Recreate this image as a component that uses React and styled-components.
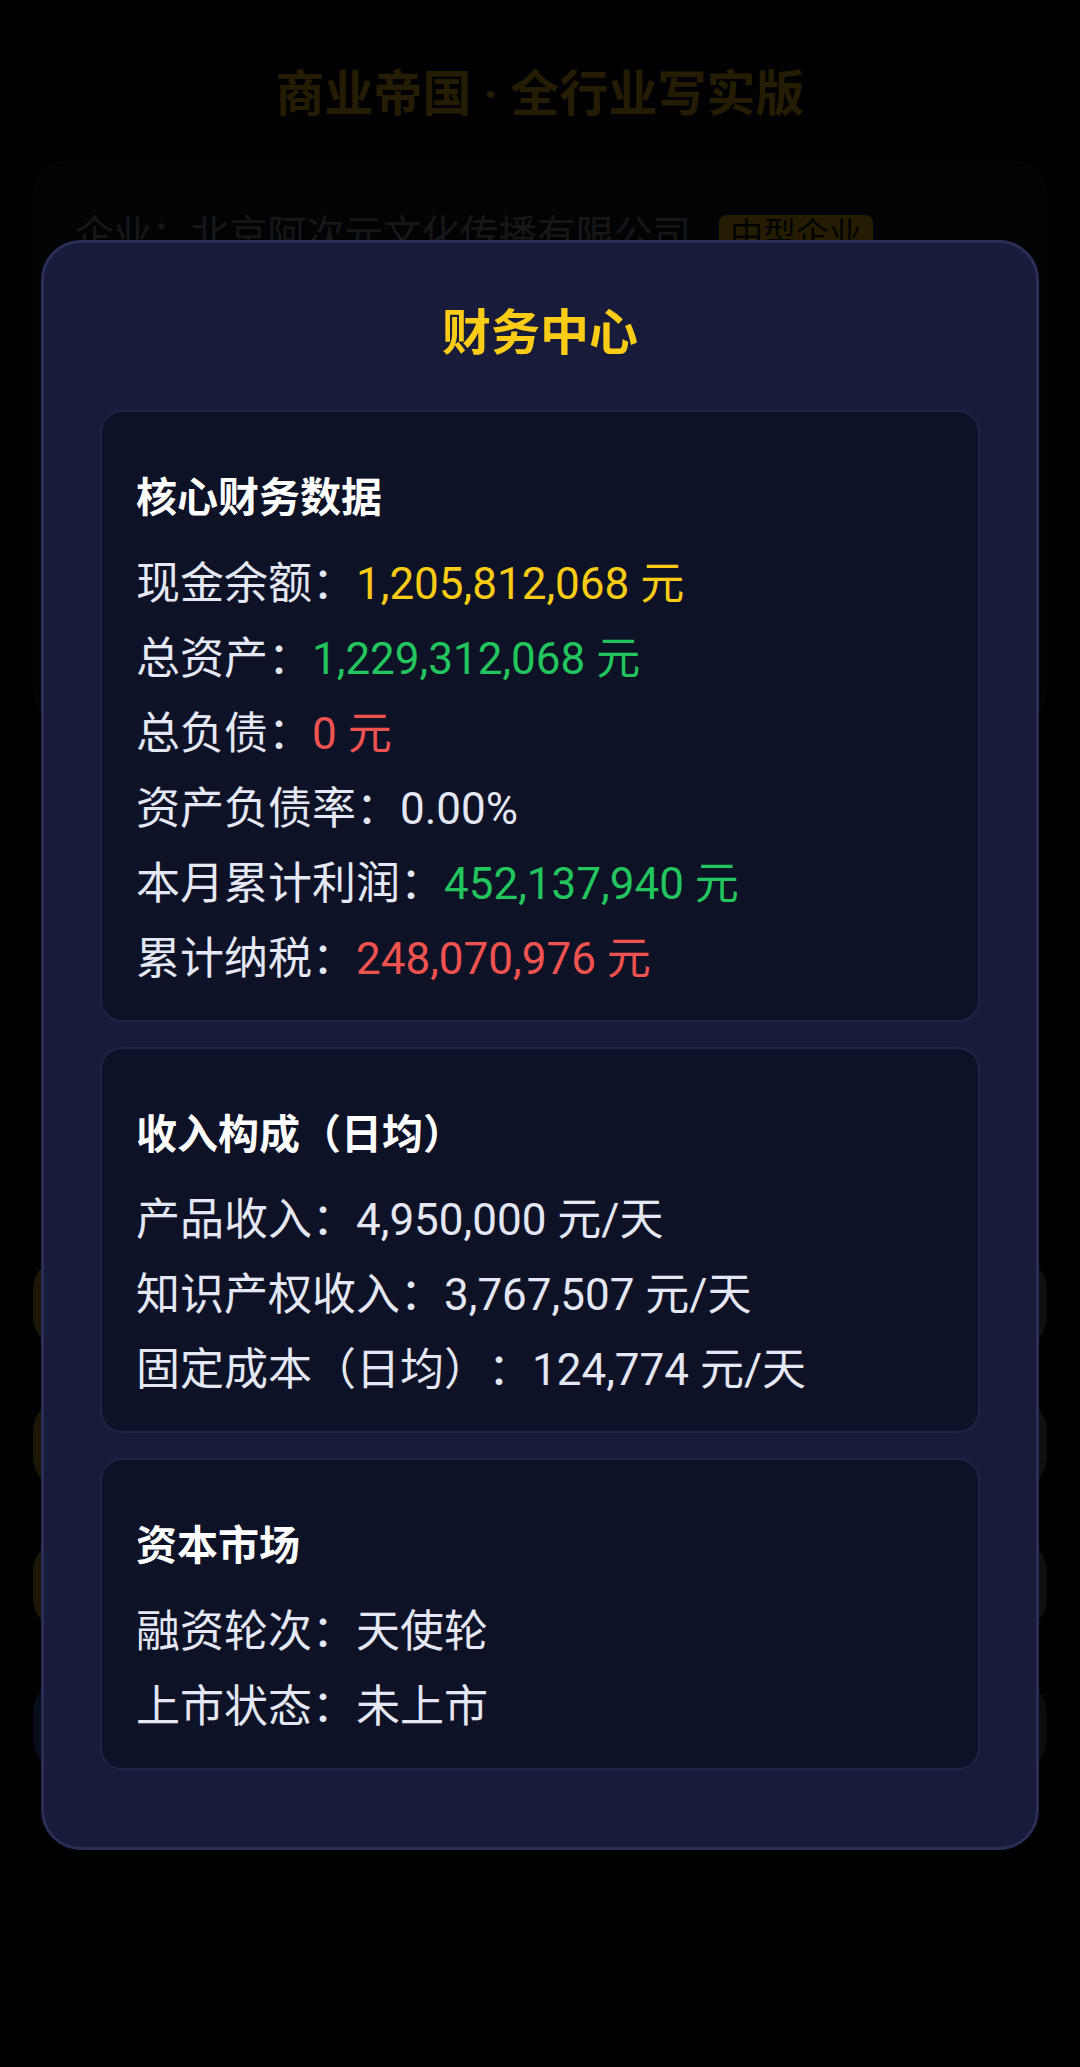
import React from "react"
import styled, { createGlobalStyle } from "styled-components"

const GlobalStyle = createGlobalStyle`
  html, body {
    margin: 0;
    padding: 0;
    background: #0a0d18;
  }
  body {
    font-family: Roboto, "Noto Sans CJK SC", "Noto Sans", sans-serif;
    color: #e4e7f4;
    text-spacing-trim: space-all;
  }
  * { box-sizing: border-box; }
`

// page that sits under the dialog
const Page = styled.div`
  min-height: 2067px;
  padding: 59px 33px 60px;
  background: #0a0d18;
`

const AppTitle = styled.h1`
  margin: 0 0 30px;
  text-align: center;
  font-size: 49px;
  line-height: 72px;
  font-weight: 700;
  color: #facc15;
`

const CompanyCard = styled.section`
  height: 560px;
  padding: 44px 40px;
  background: #111827;
  border: 2px solid #1f2937;
  border-radius: 33px;
  display: flex;
  align-items: flex-start;
  gap: 28px;
`

const CompanyName = styled.span`
  font-size: 38.5px;
  line-height: 56px;
  color: #9ca3af;
`

const Badge = styled.span`
  margin-top: 8px;
  padding: 0 11px;
  height: 40px;
  line-height: 40px;
  font-size: 33px;
  border-radius: 8px;
  background: #facc15;
  color: #1f1a05;
`

const ActionList = styled.div`
  margin-top: 536px;
  display: flex;
  flex-direction: column;
  gap: 49px;
`

const ActionButton = styled.div`
  height: 92px;
  border-radius: 33px;
  background: ${p => (p.$blue ? "linear-gradient(90deg, #3b5fc0, #4b5563)" : "linear-gradient(90deg, #c9a227, #6b7280)")};
`

// dialog
const Overlay = styled.div`
  position: fixed;
  inset: 0;
  background: rgba(0, 0, 0, 0.86);
  display: flex;
  justify-content: center;
  align-items: flex-start;
  padding-top: 240px;
`

const Modal = styled.div`
  width: 998px;
  padding: 55px 56px 52px;
  background: #181b3a;
  border: 3px solid #2a2e56;
  border-radius: 40px;
`

const ModalTitle = styled.h2`
  margin: 0 0 40px;
  text-align: center;
  font-size: 49px;
  line-height: 72px;
  font-weight: 700;
  color: #facc15;
`

const Card = styled.div`
  margin-bottom: 25px;
  padding: 56px 34px 23px;
  background: #0d1226;
  border: 2px solid #1f2547;
  border-radius: 22px;
`

const CardTitle = styled.h3`
  margin: 0 0 18.5px;
  font-size: 41px;
  line-height: 60px;
  font-weight: 700;
  color: #ffffff;
`

const Row = styled.div`
  font-size: 44px;
  line-height: 75px;
  color: #e4e7f4;
  white-space: nowrap;
`

const Value = styled.span`
  color: ${p => p.$color || "inherit"};
`

const YELLOW = "#facc15"
const GREEN = "#22c55e"
const RED = "#ef5350"

const core = [
  { label: "现金余额", value: "1,205,812,068 元", color: YELLOW },
  { label: "总资产", value: "1,229,312,068 元", color: GREEN },
  { label: "总负债", value: "0 元", color: RED },
  { label: "资产负债率", value: "0.00%" },
  { label: "本月累计利润", value: "452,137,940 元", color: GREEN },
  { label: "累计纳税", value: "248,070,976 元", color: RED },
]

const income = [
  { label: "产品收入", value: "4,950,000 元/天" },
  { label: "知识产权收入", value: "3,767,507 元/天" },
  { label: "固定成本（日均）", value: "124,774 元/天" },
]

const capital = [
  { label: "融资轮次", value: "天使轮" },
  { label: "上市状态", value: "未上市" },
]

function Section({ title, rows }) {
  return (
    <Card>
      <CardTitle>{title}</CardTitle>
      {rows.map(r => (
        <Row key={r.label}>
          {r.label}：<Value $color={r.color}>{r.value}</Value>
        </Row>
      ))}
    </Card>
  )
}

export default function App() {
  return (
    <>
      <GlobalStyle />
      <Page>
        <AppTitle>商业帝国 · 全行业写实版</AppTitle>
        <CompanyCard>
          <CompanyName>企业：北京阿次元文化传播有限公司</CompanyName>
          <Badge>中型企业</Badge>
        </CompanyCard>
        <ActionList>
          <ActionButton />
          <ActionButton />
          <ActionButton />
          <ActionButton $blue />
        </ActionList>
      </Page>

      <Overlay>
        <Modal>
          <ModalTitle>财务中心</ModalTitle>
          <Section title="核心财务数据" rows={core} />
          <Section title="收入构成（日均）" rows={income} />
          <Section title="资本市场" rows={capital} />
        </Modal>
      </Overlay>
    </>
  )
}
